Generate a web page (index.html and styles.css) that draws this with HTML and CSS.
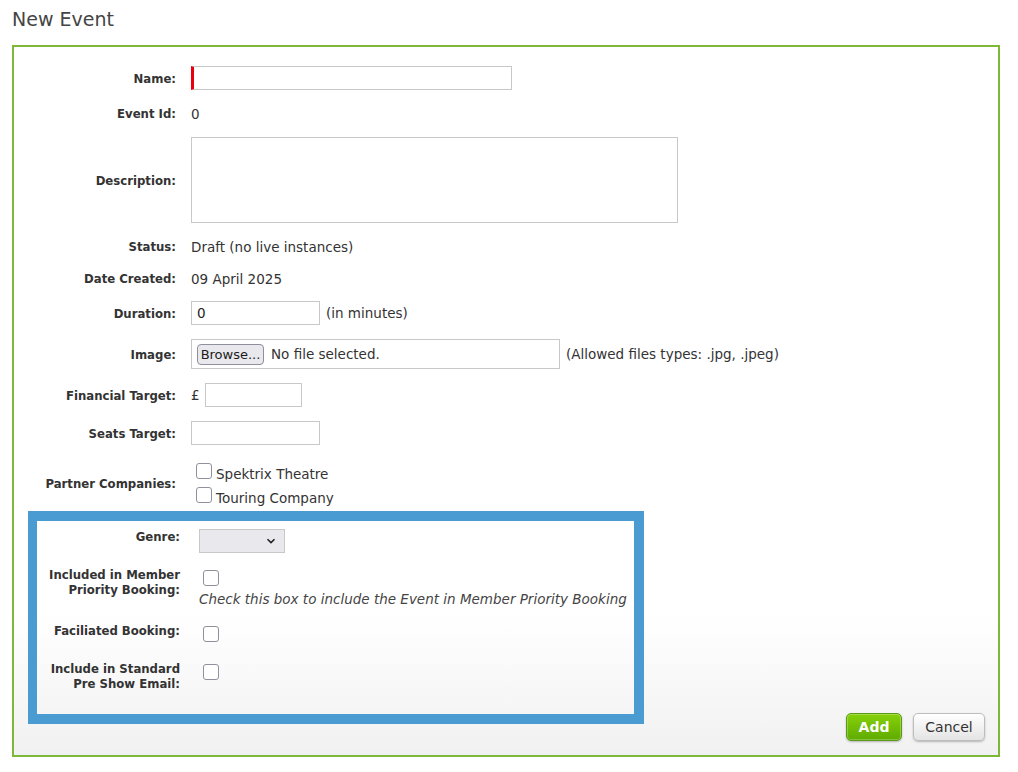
FILE: index.html
```html
<!DOCTYPE html>
<html lang="en">
<head>
<meta charset="utf-8">
<title>New Event</title>
<link rel="stylesheet" href="styles.css">
</head>
<body>
<h1 class="title">New Event</h1>
<form class="panel">
  <div class="row">
    <label class="lbl">Name:</label>
    <div class="val"><input class="txt name" type="text"></div>
  </div>
  <div class="row">
    <span class="lbl">Event Id:</span>
    <div class="val text">0</div>
  </div>
  <div class="row desc-row">
    <label class="lbl">Description:</label>
    <div class="val"><textarea class="area"></textarea></div>
  </div>
  <div class="row">
    <span class="lbl">Status:</span>
    <div class="val text">Draft (no live instances)</div>
  </div>
  <div class="row">
    <span class="lbl">Date Created:</span>
    <div class="val text">09 April 2025</div>
  </div>
  <div class="row">
    <label class="lbl">Duration:</label>
    <div class="val"><input class="txt short" type="text" value="0"><span class="note">(in minutes)</span></div>
  </div>
  <div class="row">
    <label class="lbl">Image:</label>
    <div class="val">
      <div class="file"><button type="button" class="browse">Browse...</button><span class="nofile">No file selected.</span></div>
      <span class="note">(Allowed files types: .jpg, .jpeg)</span>
    </div>
  </div>
  <div class="row">
    <label class="lbl">Financial Target:</label>
    <div class="val"><span class="pound">£</span><input class="txt money" type="text"></div>
  </div>
  <div class="row">
    <label class="lbl">Seats Target:</label>
    <div class="val"><input class="txt short" type="text"></div>
  </div>
  <div class="row partner-row">
    <span class="lbl">Partner Companies:</span>
    <div class="val checks">
      <label class="chk-line"><input type="checkbox" class="cb">Spektrix Theatre</label>
      <label class="chk-line"><input type="checkbox" class="cb">Touring Company</label>
    </div>
  </div>
  <div class="footer">
    <div class="highlight">
      <div class="irow">
        <span class="ilbl">Genre:</span>
        <div class="ival">
          <div class="select-wrap">
            <select class="sel"><option></option></select>
            <svg class="chev" width="10" height="6" viewBox="0 0 10 6"><path d="M1.5 1.2 L5 4.6 L8.5 1.2" fill="none" stroke="#222" stroke-width="1.6"/></svg>
          </div>
        </div>
      </div>
      <div class="irow">
        <span class="ilbl">Included in Member Priority Booking:</span>
        <div class="ival col">
          <input type="checkbox" class="cb">
          <span class="help">Check this box to include the Event in Member Priority Booking</span>
        </div>
      </div>
      <div class="irow fac-row">
        <span class="ilbl">Faciliated Booking:</span>
        <div class="ival"><input type="checkbox" class="cb"></div>
      </div>
      <div class="irow">
        <span class="ilbl">Include in Standard Pre Show Email:</span>
        <div class="ival"><input type="checkbox" class="cb"></div>
      </div>
    </div>
    <div class="buttons">
      <button type="button" class="btn add">Add</button>
      <button type="button" class="btn cancel">Cancel</button>
    </div>
  </div>
</form>
</body>
</html>
```
FILE: styles.css
```css
html, body {
  margin: 0;
  padding: 0;
  background: #fff;
}
body {
  padding: 0 18px 0 12px;
  font-family: "DejaVu Sans", Verdana, sans-serif;
  font-size: 13.5px;
  color: #333;
}
.title {
  margin: 0 0 14px;
  padding-top: 7px;
  font-size: 19px;
  line-height: 24px;
  font-weight: normal;
  color: #444;
}
.panel {
  border: 2px solid #7db83a;
  padding: 12px 13px 14px 0;
  background: linear-gradient(to bottom, #fff 0%, #fff 80%, #f1f1f1 100%);
}
.row {
  display: flex;
  align-items: center;
  padding: 7px 0;
}
.lbl {
  width: 162px;
  flex: none;
  text-align: right;
  font-family: "DejaVu Sans Condensed", "DejaVu Sans", sans-serif;
  font-stretch: condensed;
  font-weight: bold;
  font-size: 13px;
  line-height: 18px;
  color: #333;
  padding-top: 1px;
  margin-bottom: -1px;
}
.val {
  margin-left: 15px;
  display: flex;
  align-items: center;
  line-height: 18px;
}
.text { min-height: 18px; padding-top: 1px; margin-bottom: -1px; }
.txt {
  box-sizing: border-box;
  height: 24px;
  border: 1px solid #c8c8c8;
  padding: 0 5px;
  font-family: "DejaVu Sans", sans-serif;
  font-size: 13.5px;
  color: #222;
  margin: 0;
  background: #fff;
}
.name {
  width: 321px;
  border-left: 3px solid #e8000b;
}
.short { width: 129px; }
.money { width: 97px; }
.pound { margin-right: 5px; }
.area {
  box-sizing: border-box;
  width: 487px;
  height: 86px;
  margin: 1px 0 0;
  border: 1px solid #c8c8c8;
  resize: none;
  display: block;
}
.note { margin-left: 6px; }
.file {
  box-sizing: border-box;
  width: 369px;
  height: 30px;
  border: 1px solid #c8c8c8;
  display: flex;
  align-items: center;
  padding-left: 5px;
}
.browse {
  box-sizing: border-box;
  height: 21px;
  width: 67px;
  padding: 0;
  background: #e9e9ed;
  border: 1px solid #8f8f9d;
  border-radius: 4px;
  font-family: "DejaVu Sans", sans-serif;
  font-size: 13px;
  color: #1b1b1b;
}
.nofile { margin-left: 7px; }
.partner-row { padding-bottom: 4px; }
.checks {
  flex-direction: column;
  align-items: flex-start;
}
.chk-line {
  display: flex;
  align-items: center;
  height: 24px;
  padding-top: 5px;
  box-sizing: border-box;
}
.cb {
  appearance: none;
  -webkit-appearance: none;
  box-sizing: border-box;
  width: 16px;
  height: 16px;
  border: 1px solid #8f8f9d;
  border-radius: 3px;
  background: #fff;
  margin: 3px 3px 3px 4px;
  flex: none;
}
.chk-line .cb { margin: 0 4px 0 5px; position: relative; top: -3px; }

.footer {
  display: flex;
  align-items: flex-end;
  justify-content: space-between;
}
.highlight {
  box-sizing: border-box;
  width: 616px;
  margin-left: 14px;
  margin-bottom: 17px;
  border: 10px solid #4b9bd3;
  border-left-width: 9px;
  padding: 1px 0 16px;
}
.irow {
  display: flex;
  align-items: flex-start;
  padding: 7px 0;
}
.fac-row { padding-bottom: 9px; }
.ilbl {
  width: 143px;
  flex: none;
  text-align: right;
  font-family: "DejaVu Sans Condensed", "DejaVu Sans", sans-serif;
  font-stretch: condensed;
  font-weight: bold;
  font-size: 13px;
  line-height: 15px;
  color: #333;
}
.ival {
  margin-left: 19px;
  display: flex;
}
.ival.col {
  flex-direction: column;
  align-items: flex-start;
}
.help {
  font-style: italic;
  line-height: 18px;
  padding-top: 1px;
  margin-bottom: 1px;
  color: #444;
}
.select-wrap {
  position: relative;
  width: 86px;
  height: 24px;
}
.sel {
  appearance: none;
  -webkit-appearance: none;
  box-sizing: border-box;
  width: 86px;
  height: 24px;
  margin: 0;
  background: #e9e9ed;
  border: 1px solid #c8c8c8;
  border-radius: 0;
}
.chev {
  position: absolute;
  left: 67px;
  top: 9px;
  pointer-events: none;
}
.buttons {
  display: flex;
  gap: 11px;
}
.btn {
  box-sizing: border-box;
  height: 28px;
  border-radius: 5px;
  font-family: "DejaVu Sans", sans-serif;
  font-size: 14px;
  padding: 0;
  box-shadow: 0 1px 2px rgba(0,0,0,0.25);
}
.add {
  width: 56px;
  font-weight: bold;
  color: #fff;
  background: linear-gradient(to bottom, #86d10a, #5fab00);
  border: 1px solid #5c9a1a;
  box-shadow: inset 0 0 0 1px rgba(255,255,255,0.25), 0 1px 2px rgba(0,0,0,0.25);
}
.cancel {
  width: 72px;
  color: #333;
  background: linear-gradient(to bottom, #ffffff, #e4e4e4);
  border: 1px solid #bdbdbd;
}
```
